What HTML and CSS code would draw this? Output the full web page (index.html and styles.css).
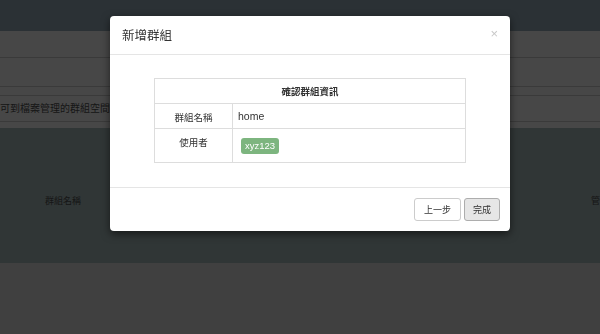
FILE: index.html
```html
<!DOCTYPE html>
<html lang="zh-Hant">
<head>
    <meta charset="UTF-8">
    <meta name="viewport" content="width=device-width, initial-scale=1.0">
    <title>群組管理 - 新增群組</title>
    <link rel="stylesheet" href="styles.css">
</head>
<body>
    <div class="navbar"></div>

    <div class="page">
        <div class="crumb"></div>
        <div class="toolbar"></div>
        <div class="spacer"></div>
        <div class="notice">可到檔案管理的群組空間進行檔案管理</div>
        <div class="gap"></div>
        <div class="list-head">
            <span class="col-name">群組名稱</span>
            <span class="col-right">管</span>
        </div>
        <div class="list-foot"></div>
    </div>

    <!-- modal: 新增群組 (step 2) -->
    <div class="backdrop">
        <div class="modal">
            <div class="modal-header">
                <h4 class="modal-title">新增群組</h4>
                <button class="close">×</button>
            </div>
            <div class="modal-body">
                <table class="confirm-table">
                    <tr>
                        <th colspan="2">確認群組資訊</th>
                    </tr>
                    <tr>
                        <td class="label">群組名稱</td>
                        <td class="value">home</td>
                    </tr>
                    <tr>
                        <td class="label">使用者</td>
                        <td class="value tall"><span class="badge">xyz123</span></td>
                    </tr>
                </table>
            </div>
            <div class="modal-footer">
                <button class="btn">上一步</button>
                <button class="btn active">完成</button>
            </div>
        </div>
    </div>
</body>
</html>
```

FILE: styles.css
```css
:root {
    --nav: #2b3135;
    --page: #474747;
    --line: #3a3a3a;
    --list: #303636;
    --bottom: #404040;
    --border: #dddddd;
    --text: #333333;
    --badge: #7db57f;
}

* {
    margin: 0;
    padding: 0;
    box-sizing: border-box;
}

body {
    font-family: "Liberation Sans", "Noto Sans CJK TC", sans-serif;
    background: var(--bottom);
    color: var(--text);
    width: 600px;
    height: 334px;
    overflow: hidden;
}

.navbar {
    height: 31px;
    background: var(--nav);
}

.page {
    background: var(--page);
}

.crumb {
    height: 27px;
    border-bottom: 1px solid var(--line);
}

.toolbar {
    height: 29px;
    border-bottom: 1px solid var(--line);
}

.spacer {
    height: 9px;
    border-bottom: 1px solid var(--line);
}

.notice {
    height: 26px;
    line-height: 26px;
    font-size: 10px;
    color: #151515;
    white-space: nowrap;
    border-bottom: 1px solid var(--line);
}

.gap {
    height: 6px;
}

.list-head {
    height: 135px;
    background: var(--list);
    display: flex;
    justify-content: space-between;
    align-items: center;
    padding-top: 10px;
    font-size: 9px;
    color: #151515;
}

.col-name {
    margin-left: 45px;
}

.col-right {
    margin-right: 0;
}

.list-foot {
    height: 71px;
    background: var(--bottom);
}

/* modal */

.backdrop {
    position: fixed;
    inset: 0;
    display: flex;
    justify-content: center;
    align-items: flex-start;
    padding-top: 16px;
    padding-left: 20px;
}

.modal {
    width: 400px;
    background: #fff;
    border-radius: 4px;
    box-shadow: 0 3px 9px rgba(0,0,0,0.55);
}

.modal-header {
    height: 39px;
    padding: 0 12px;
    display: flex;
    justify-content: space-between;
    align-items: center;
    border-bottom: 1px solid #e5e5e5;
}

.modal-title {
    font-size: 12.5px;
    font-weight: normal;
    color: #333;
    padding-bottom: 2px;
}

.close {
    background: none;
    border: none;
    font-size: 13px;
    color: #c8c8c8;
    margin-bottom: 4px;
}

.modal-body {
    padding: 23px 0 24px;
}

.confirm-table {
    width: 312px;
    margin: 0 auto;
    border-collapse: collapse;
    font-size: 9.5px;
}

.confirm-table th,
.confirm-table td {
    border: 1px solid var(--border);
}

.confirm-table th {
    height: 25px;
    font-weight: 600;
    text-align: center;
}

.confirm-table td {
    height: 25px;
}

.label {
    width: 78px;
    text-align: center;
    vertical-align: top;
    padding-top: 6px;
}

.value {
    padding-left: 5px;
    font-size: 10.5px;
}

.value.tall {
    height: 34px;
    padding-left: 8px;
    vertical-align: middle;
}

.badge {
    display: inline-block;
    background: var(--badge);
    color: #fff;
    font-size: 9.5px;
    padding: 2px 4px;
    border-radius: 3px;
    line-height: 12px;
}

.modal-footer {
    border-top: 1px solid #e5e5e5;
    height: 44px;
    display: flex;
    justify-content: flex-end;
    align-items: center;
    gap: 3px;
    padding-right: 10px;
}

.btn {
    height: 23px;
    padding: 0 9px;
    font-family: "Noto Sans CJK TC", sans-serif;
    font-size: 9px;
    color: #333;
    background: #fff;
    border: 1px solid #cccccc;
    border-radius: 3px;
    cursor: pointer;
}

.btn.active {
    background: #e6e6e6;
    border-color: #adadad;
    padding: 0 8px;
}
```
